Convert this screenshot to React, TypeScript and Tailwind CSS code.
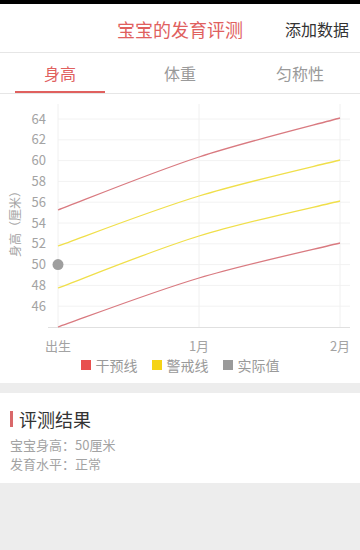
import React from 'react';

type Pt = [number, number];

// smooth path through points (catmull-rom -> bezier)
const smooth = (pts: Pt[]) => {
  let d = `M${pts[0][0]},${pts[0][1]}`;
  for (let i = 0; i < pts.length - 1; i++) {
    const p0 = pts[i - 1] || pts[i];
    const p1 = pts[i];
    const p2 = pts[i + 1];
    const p3 = pts[i + 2] || p2;
    const c1x = p1[0] + (p2[0] - p0[0]) / 6;
    const c1y = p1[1] + (p2[1] - p0[1]) / 6;
    const c2x = p2[0] - (p3[0] - p1[0]) / 6;
    const c2y = p2[1] - (p3[1] - p1[1]) / 6;
    d += ` C${c1x},${c1y} ${c2x},${c2y} ${p2[0]},${p2[1]}`;
  }
  return d;
};

const yTicks = [64, 62, 60, 58, 56, 54, 52, 50, 48, 46];
const yOf = (v: number) => 233 - (v - 44) * 10.4;

const lines: { pts: Pt[]; color: string }[] = [
  { pts: [[58, 116], [199, 63], [340, 24]], color: '#d97a80' },
  { pts: [[58, 152], [199, 102], [340, 66]], color: '#f0df4a' },
  { pts: [[58, 194], [199, 142], [340, 107]], color: '#f0df4a' },
  { pts: [[58, 233], [199, 184], [340, 149]], color: '#d97a80' },
];

const font = '"Noto Sans CJK SC", "Noto Sans", sans-serif';

const Chart: React.FC = () => (
  <svg width={360} height={261} className="block">
    {yTicks.map((t) => (
      <g key={t}>
        <line x1={58} x2={350} y1={yOf(t)} y2={yOf(t)} stroke="#f2f2f2" strokeWidth={1} />
        <text x={46} y={yOf(t) + 1} textAnchor="end" dominantBaseline="middle" fontSize={13} fill="#a3a3a3" fontFamily={font}>
          {t}
        </text>
      </g>
    ))}
    {[58, 199, 340].map((x) => (
      <line key={x} x1={x} x2={x} y1={10} y2={233} stroke="#f0f0f0" strokeWidth={1} />
    ))}
    <line x1={48} x2={350} y1={233.5} y2={233.5} stroke="#e0e0e0" strokeWidth={1} />
    {lines.map((l, i) => (
      <path key={i} d={smooth(l.pts)} fill="none" stroke={l.color} strokeWidth={1.3} />
    ))}
    <circle cx={58} cy={yOf(50)} r={5.5} fill="#9e9e9e" />
    <text x={58} y={253} textAnchor="middle" dominantBaseline="middle" fontSize={13} fill="#a3a3a3" fontFamily={font}>出生</text>
    <text x={199} y={253} textAnchor="middle" dominantBaseline="middle" fontSize={13} fill="#a3a3a3" fontFamily={font}>1月</text>
    <text x={340} y={253} textAnchor="middle" dominantBaseline="middle" fontSize={13} fill="#a3a3a3" fontFamily={font}>2月</text>
    <text
      x={17}
      y={127}
      textAnchor="middle"
      dominantBaseline="middle"
      fontSize={12}
      fill="#a3a3a3"
      fontFamily={font}
      transform="rotate(-90 17 127)"
    >
      身高（厘米）
    </text>
  </svg>
);

const tabs = ['身高', '体重', '匀称性'];

const legend = [
  { label: '干预线', color: 'bg-[#e8504e]' },
  { label: '警戒线', color: 'bg-[#f5d315]' },
  { label: '实际值', color: 'bg-[#9a9a9a]' },
];

const Colon = () => <span className="font-['Noto_Sans_CJK_TC']">：</span>;

export default function App() {
  return (
    <div lang="zh-CN" className="w-[360px] h-[550px] bg-[#ededed] overflow-hidden" style={{ fontFamily: font }}>
      <div className="h-[4px] bg-black" />
      <div className="relative h-[49px] bg-white border-b border-[#e6e6e6] flex items-center justify-center">
        <span className="text-[18px] text-[#e0605e] mt-[3px]">宝宝的发育评测</span>
        <span className="absolute right-[11px] top-[13px] text-[16px] text-[#333]">添加数据</span>
      </div>
      <div className="h-[41px] bg-white border-b border-[#e6e6e6] grid grid-cols-3">
        {tabs.map((t, i) => (
          <div key={t} className="relative flex items-center justify-center">
            <span className={`text-[16px] ${i === 0 ? 'text-[#e0605e]' : 'text-[#9a9a9a]'}`}>{t}</span>
            {i === 0 && <div className="absolute bottom-0 left-[15px] right-[15px] h-[2px] bg-[#e0605e]" />}
          </div>
        ))}
      </div>
      <div className="bg-white pb-[8px]">
        <Chart />
        <div className="h-5 flex items-center justify-center gap-[14px]">
          {legend.map((l) => (
            <div key={l.label} className="flex items-center gap-[5px]">
              <span className={`w-[10px] h-[10px] ${l.color}`} />
              <span className="text-[14px] text-[#9a9a9a]">{l.label}</span>
            </div>
          ))}
        </div>
      </div>
      <div className="mt-[10px] bg-white h-[90px] px-[10px] pt-[15px]">
        <div className="flex items-center gap-[6px]">
          <span className="w-[3px] h-[16px] bg-[#d9686a]" />
          <span className="text-[18px] text-[#333] leading-[22px]">评测结果</span>
        </div>
        <div className="mt-[5px] text-[13px] leading-[19px] text-[#a3a3a3]">
          <div>宝宝身高<Colon />50厘米</div>
          <div>发育水平<Colon />正常</div>
        </div>
      </div>
    </div>
  );
}
